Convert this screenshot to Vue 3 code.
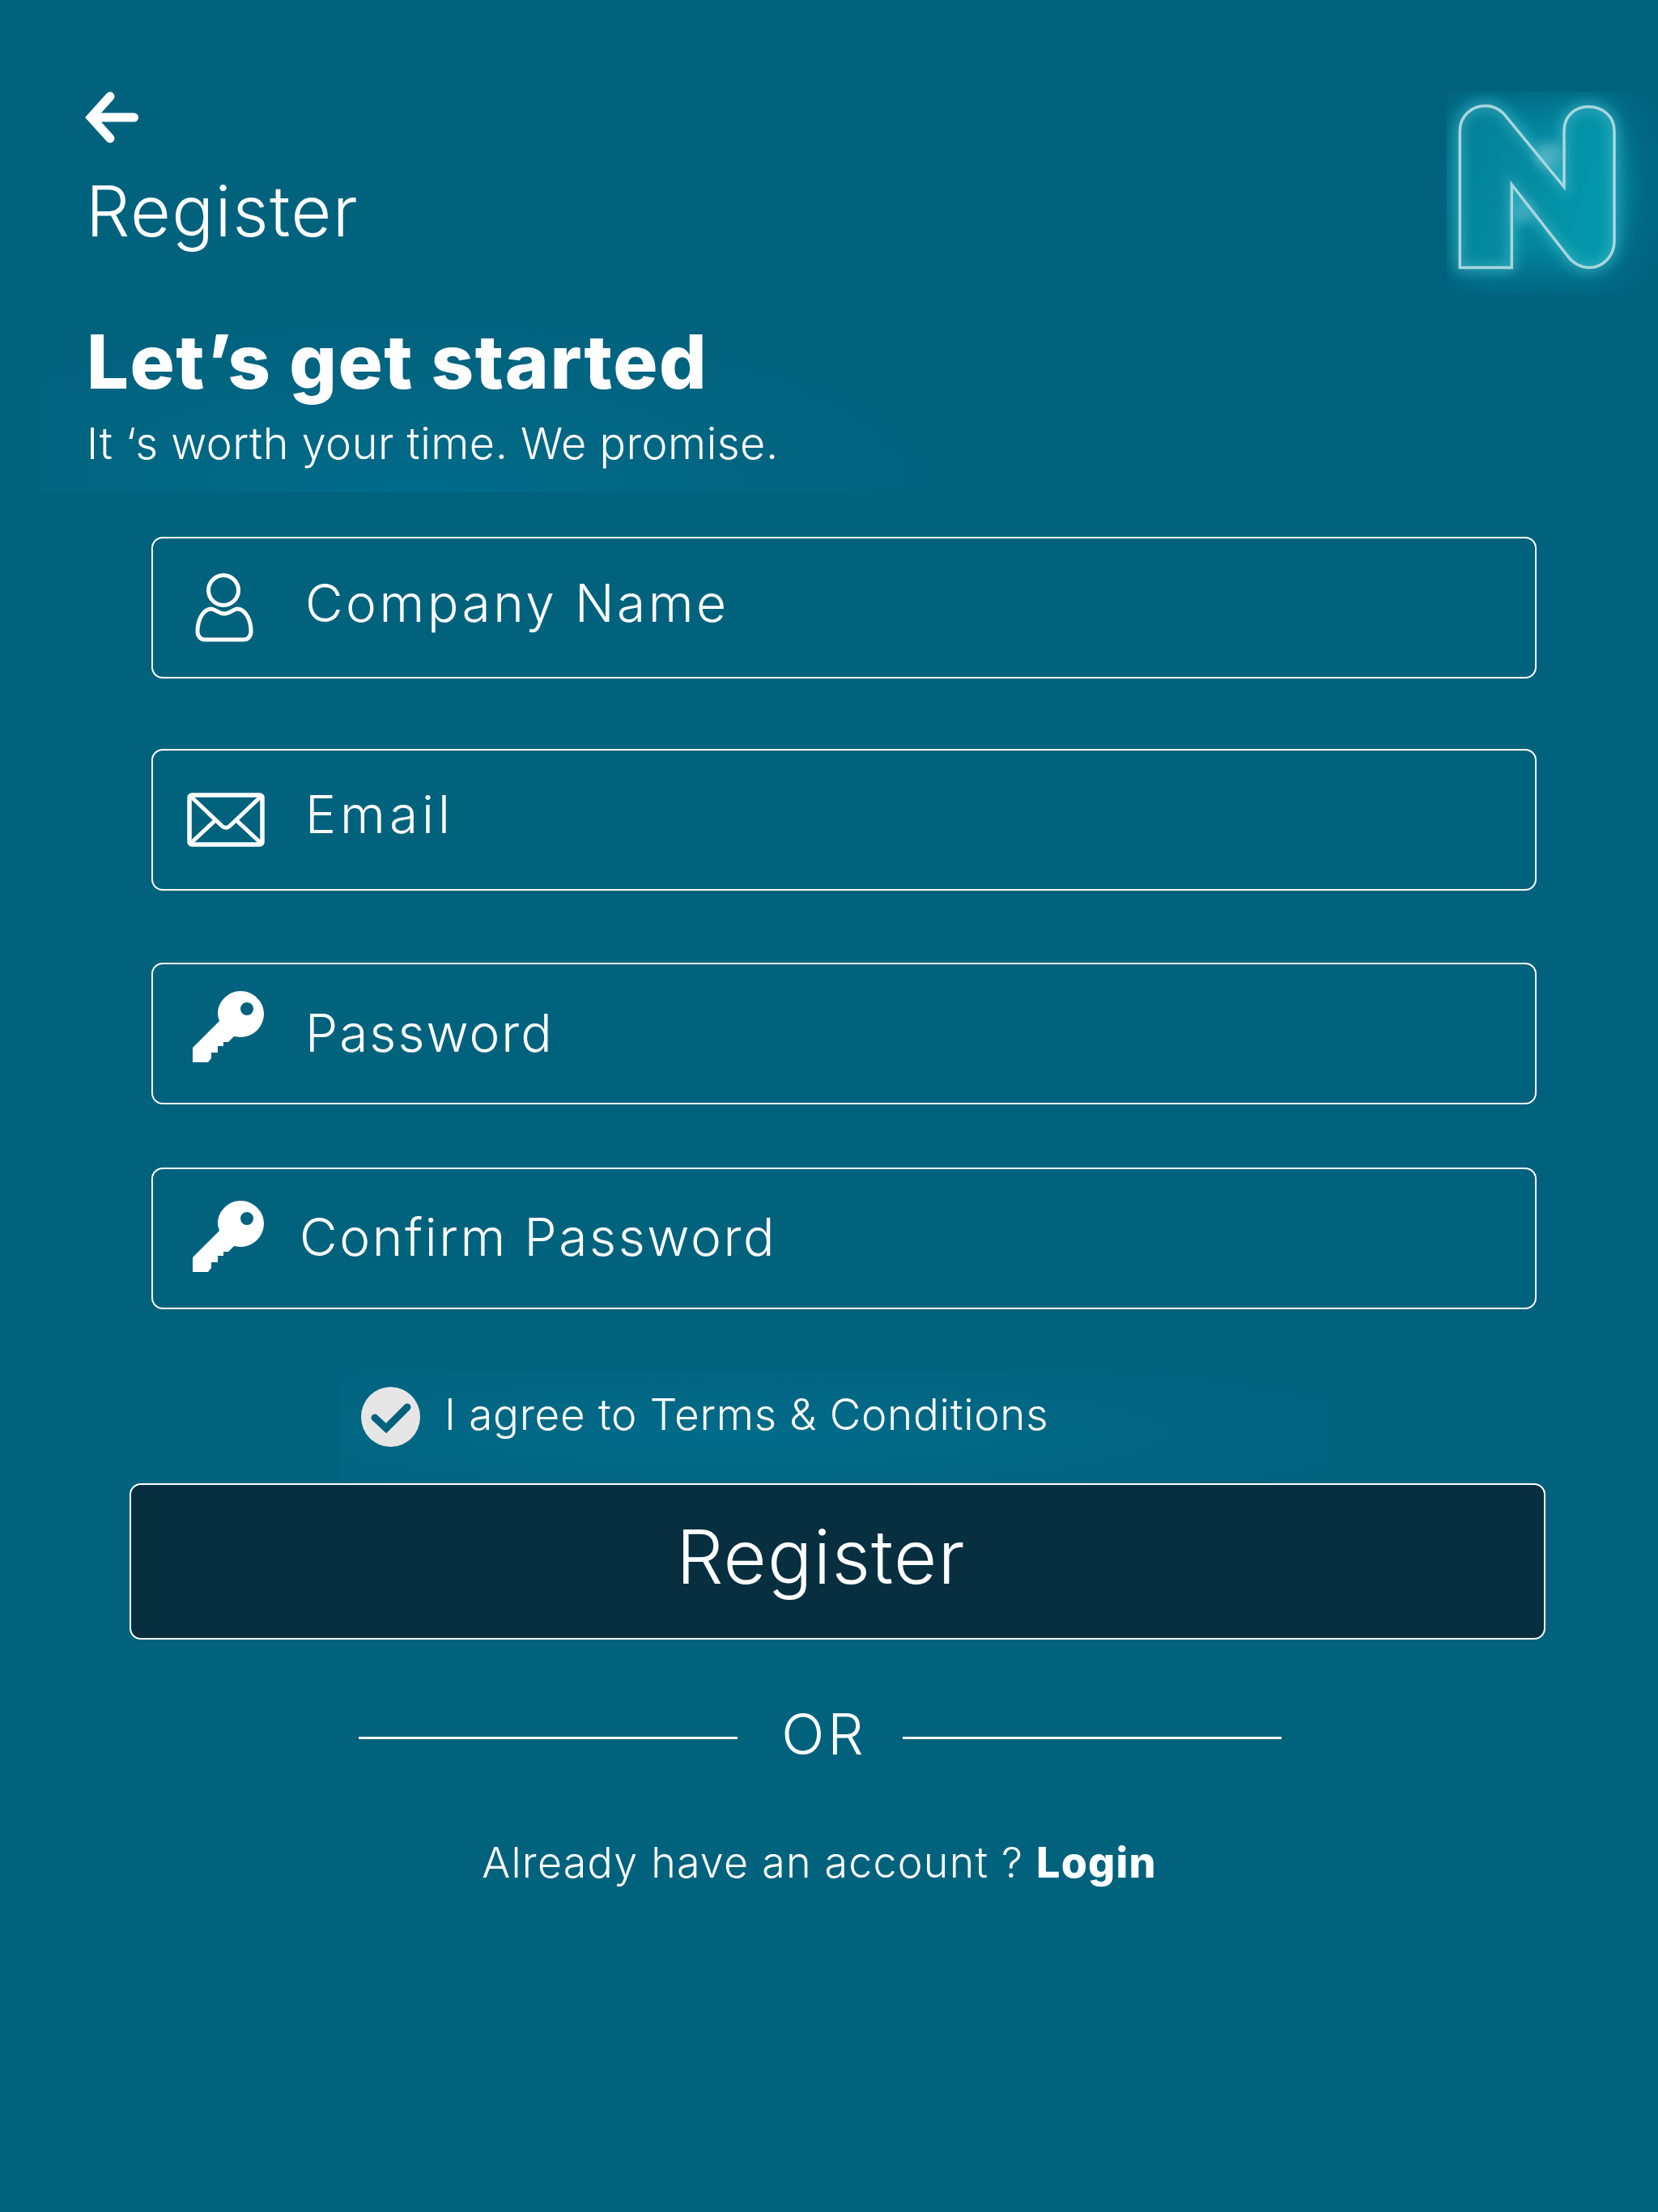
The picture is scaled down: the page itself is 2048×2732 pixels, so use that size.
<script setup>
const fields = [
  { label: 'Company Name', icon: 'user', cls: 'f-company' },
  { label: 'Email', icon: 'mail', cls: 'f-email' },
  { label: 'Password', icon: 'key', cls: 'f-pass' },
  { label: 'Confirm Password', icon: 'key', cls: 'f-confirm' },
]

const nPath =
  'M16.300 217.500 V48.700 C16.300 31 30 17.700 48 17.700 C57 17.700 64 21 70 27 L145 118 V48.700 C145 31 158 18.700 175 18.700 C193 18.700 207 31 207 48.700 V185 C207 203 193 217.500 176 217.500 C166 217.500 156 212 150 204 L80.300 115 V217.500 Z'
</script>

<template>
  <main class="page">
    <header class="head">
      <div class="head-left">
        <svg class="back" viewBox="0 0 66 64" aria-hidden="true">
          <path d="M31 6 L7.500 32 L31 58 M9 32 H60.500" fill="none" stroke="#fff" stroke-width="11" stroke-linecap="round" stroke-linejoin="miter" />
        </svg>
        <div class="head-title">Register</div>
      </div>
      <svg class="logo" viewBox="0 0 261 250" aria-hidden="true">
        <defs>
          <radialGradient id="nBack" cx="120" cy="118" r="170" gradientUnits="userSpaceOnUse">
            <stop offset="0%" stop-color="#038ba3" />
            <stop offset="45%" stop-color="#03829b" />
            <stop offset="72%" stop-color="#016a85" />
            <stop offset="100%" stop-color="#01627e" />
          </radialGradient>
          <linearGradient id="nFill" x1="0" y1="0" x2="1" y2="0.300">
            <stop offset="0%" stop-color="#047f97" />
            <stop offset="100%" stop-color="#0498ac" />
          </linearGradient>
          <filter id="nBlur" x="-30%" y="-30%" width="160%" height="160%">
            <feGaussianBlur stdDeviation="16" />
          </filter>
          <filter id="nSoft" x="-30%" y="-30%" width="160%" height="160%">
            <feGaussianBlur stdDeviation="7" />
          </filter>
        </defs>
        <rect width="261" height="250" fill="url(#nBack)" />
        <path :d="nPath" fill="#04a0b4" filter="url(#nBlur)" />
        <path :d="nPath" fill="url(#nFill)" />
        <path :d="nPath" fill="none" stroke="#7fd0dc" stroke-width="9" stroke-opacity="0.4" filter="url(#nSoft)" />
        <circle cx="126" cy="78" r="16" fill="#8ccdd8" fill-opacity="0.5" filter="url(#nSoft)" />
        <circle cx="94" cy="150" r="13" fill="#8ccdd8" fill-opacity="0.4" filter="url(#nSoft)" />
        <path :d="nPath" fill="none" stroke="#a9d6de" stroke-width="3.500" />
      </svg>
    </header>

    <section class="intro">
      <h1 class="title">Let’s get started</h1>
      <p class="sub">It ‘s worth your time. We promise.</p>
    </section>

    <form class="form" @submit.prevent>
      <label v-for="f in fields" :key="f.label" class="field" :class="f.cls">
        <span class="ico">
          <svg v-if="f.icon === 'user'" class="i-user" viewBox="0 0 72 85" aria-hidden="true">
            <circle cx="35" cy="21" r="18.500" fill="none" stroke="#fff" stroke-width="5" />
            <path d="M20 44 C27 45 29 50 36 50 C43 50 46 45 52 44 C61 44 69 56 69 72 C69 78 65 82 60 82 H12 C7 82 3 78 3 72 C3 56 11 44 20 44 Z" fill="none" stroke="#fff" stroke-width="5" />
          </svg>
          <svg v-else-if="f.icon === 'mail'" class="i-mail" viewBox="0 0 96 67" aria-hidden="true">
            <rect x="3" y="3" width="90" height="61" rx="3" fill="none" stroke="#fff" stroke-width="5.500" />
            <path d="M4 4 L43 41 C46 44 50 44 53 41 L92 4 M4 63 L34 35 M92 63 L62 35" fill="none" stroke="#fff" stroke-width="5" />
          </svg>
          <svg v-else class="i-key" viewBox="0 0 88 88" aria-hidden="true">
            <path fill-rule="evenodd" fill="#fff" d="M59 0 C75 0 88 13 88 28 C88 44 75 57 59 57 C56 57 53 56 51 56 L44 63 H38 V68 H31 V76 H23 V83 L19 88 H0 V70 L33 37 C32 34 31 31 31 28 C31 13 44 0 59 0 Z M67 14 A8 8 0 1 0 67 30 A8 8 0 1 0 67 14 Z" />
          </svg>
        </span>
        <span class="label">{{ f.label }}</span>
      </label>

      <div class="agree">
        <svg class="check" viewBox="0 0 73 74" aria-hidden="true">
          <ellipse cx="36.500" cy="37" rx="36.500" ry="37" fill="#e6e6e6" />
          <path d="M17 38 L31 51 L57 25" fill="none" stroke="#01627e" stroke-width="9" stroke-linejoin="miter" stroke-linecap="round" />
        </svg>
        <span class="agree-text">I agree to Terms &amp; Conditions</span>
      </div>

      <button class="submit" type="submit">Register</button>
    </form>

    <div class="or">
      <span class="or-line" />
      <span class="or-text">OR</span>
      <span class="or-line" />
    </div>

    <p class="login">Already have an account ? <b>Login</b></p>
  </main>
</template>

<style>
body {
  margin: 0;
  background: #01627e;
}
</style>

<style scoped>
.page {
  width: 2048px;
  height: 2732px;
  box-sizing: border-box;
  overflow: hidden;
  padding-top: 113px;
  /* слабые светлые пятна за заголовком и за строкой согласия */
  background:
    radial-gradient(60% 85% at 42% 100%, #026b8a, rgba(2, 107, 138, 0)) 50px 348px / 1100px 260px no-repeat,
    radial-gradient(70% 75% at 40% 55%, #026b8a, rgba(2, 107, 138, 0)) 420px 1693px / 1220px 140px no-repeat,
    #01627e;
  color: #fff;
  font-family: Inter, 'Noto Sans', sans-serif;
  font-weight: 300;
}

.head {
  display: flex;
  justify-content: space-between;
  align-items: flex-start;
  padding-left: 105px;
}

.head-left {
  display: flex;
  flex-direction: column;
}

.back {
  display: block;
  width: 66px;
  height: 64px;
}

.head-title {
  margin: 34px 0 0 1px;
  font-size: 86px;
  line-height: 100px;
  letter-spacing: 1.5px;
}

.logo {
  display: block;
  width: 261px;
  height: 250px;
}

.intro {
  padding-left: 107px;
  margin-top: 34px;
}

.title {
  margin: 0;
  font-size: 92px;
  line-height: 100px;
  font-weight: 800;
  letter-spacing: 1.5px;
}

.sub {
  margin: 19px 0 0;
  font-size: 54px;
  line-height: 64px;
  letter-spacing: 0.5px;
}

.form {
  display: flex;
  flex-direction: column;
  margin-top: 83px;
}

.field {
  display: flex;
  align-items: center;
  box-sizing: border-box;
  width: 1711px;
  height: 175px;
  margin-left: 187px;
  border: 2px solid #fff;
  border-radius: 14px;
}

.f-email {
  margin-top: 87px;
}

.f-pass {
  margin-top: 89px;
}

.f-confirm {
  margin-top: 78px;
}

.ico {
  display: flex;
  flex: none;
  width: 188px;
  box-sizing: border-box;
  padding-left: 40px;
}

.i-user {
  width: 72px;
  height: 85px;
  margin-left: 12px;
}

.i-mail {
  width: 96px;
  height: 67px;
  margin-left: 2px;
}

.i-key {
  width: 88px;
  height: 88px;
  margin: -6px 0 0 9px;
}

.f-pass .i-key {
  margin-top: -18px;
}

.label {
  font-size: 64px;
  letter-spacing: 3.5px;
  line-height: 80px;
  margin-top: -12px;
}

.f-email .label {
  margin-top: -13px;
  letter-spacing: 5px;
}

.f-pass .label {
  margin-top: -1px;
  letter-spacing: 2px;
}

.f-confirm .label {
  margin: -4px 0 0 -7px;
  letter-spacing: 2.6px;
}

.agree {
  display: flex;
  align-items: center;
  margin: 96px 0 0 446px;
  gap: 30px;
}

.check {
  width: 73px;
  height: 74px;
}

.agree-text {
  margin-top: -6px;
  font-size: 53px;
  letter-spacing: 0.7px;
}

.submit {
  display: block;
  box-sizing: border-box;
  width: 1749px;
  height: 193px;
  margin: 45px 0 0 160px;
  padding: 0 41px 12px 0;
  background: #072f40;
  border: 2px solid #fff;
  border-radius: 14px;
  color: #fff;
  font: inherit;
  font-size: 92px;
  letter-spacing: 1.2px;
}

.or {
  display: flex;
  align-items: center;
  justify-content: center;
  margin: 85px 0 0;
  padding-right: 22px;
}

.or-line {
  width: 468px;
  height: 3px;
  background: #fff;
}

.or-text {
  box-sizing: border-box;
  width: 204px;
  margin-top: -8px;
  padding-left: 10px;
  text-align: center;
  font-size: 70px;
  line-height: 80px;
  letter-spacing: 4px;
}

.login {
  margin: 87px 0 0;
  padding-right: 24px;
  text-align: center;
  font-size: 52px;
  line-height: 64px;
  letter-spacing: 1.2px;
}

.login b {
  font-weight: 800;
}
</style>
